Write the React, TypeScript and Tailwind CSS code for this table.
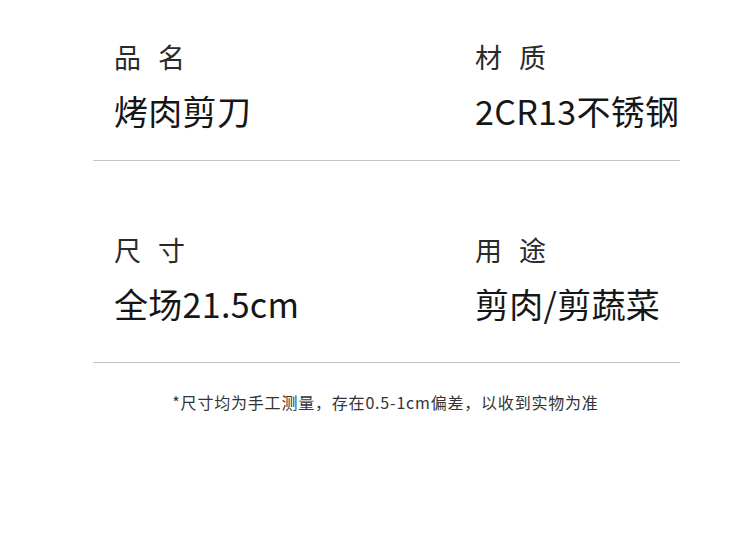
import React from 'react';

const font = { fontFamily: '"Noto Sans CJK SC", "Noto Sans", sans-serif' };

interface Spec {
  label: [string, string];
  value: string;
}

const rows: Spec[][] = [
  [
    { label: ['品', '名'], value: '烤肉剪刀' },
    { label: ['材', '质'], value: '2CR13不锈钢' },
  ],
  [
    { label: ['尺', '寸'], value: '全场21.5cm' },
    { label: ['用', '途'], value: '剪肉/剪蔬菜' },
  ],
];

const Cell: React.FC<{ spec: Spec; first: boolean }> = ({ spec, first }) => (
  <div className={first ? 'w-[361px] shrink-0' : 'flex-1'}>
    <div className="flex gap-[17px] text-[27px] leading-[27px] text-[#2a2a2a]">
      <span>{spec.label[0]}</span>
      <span>{spec.label[1]}</span>
    </div>
    <div className="mt-[24px] whitespace-nowrap text-[34px] leading-[34px] tracking-[0.3px] text-[#161616]">
      {spec.value}
    </div>
  </div>
);

export default function App() {
  return (
    <div className="w-[750px] h-[555px] bg-white overflow-hidden" style={font}>
      <div className="ml-[93px] w-[587px]">
        <div className="flex pl-[21px] pt-[43px] pb-[32px] border-b border-[#c4c4c4]">
          {rows[0].map((s, i) => (
            <Cell key={i} spec={s} first={i === 0} />
          ))}
        </div>
        <div className="flex pl-[21px] pt-[75px] pb-[41px] border-b border-[#c4c4c4]">
          {rows[1].map((s, i) => (
            <Cell key={i} spec={s} first={i === 0} />
          ))}
        </div>
      </div>
      <p className="mt-[31px] pl-[21px] text-center text-[16px] leading-[16px] tracking-[0.8px] text-[#333]">
        *尺寸均为手工测量，存在0.5-1cm偏差，以收到实物为准
      </p>
    </div>
  );
}
